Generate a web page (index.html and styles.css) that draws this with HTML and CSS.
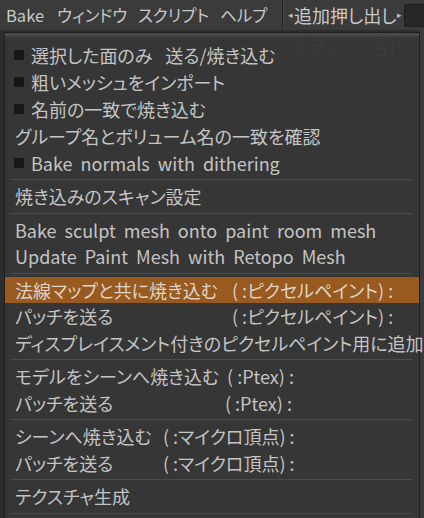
FILE: index.html
```html
<!DOCTYPE html>
<html lang="ja">
<head>
<meta charset="utf-8">
<link rel="stylesheet" href="styles.css">
</head>
<body>
<div class="app">
  <div class="menubar">
    <span class="mb-item mb-bake">Bake</span>
    <span class="mb-item mb-win">ウィンドウ</span>
    <span class="mb-item mb-script">スクリプト</span>
    <span class="mb-item mb-help">ヘルプ</span>
    <span class="mb-vsep"></span>
    <span class="mb-extrude"><span class="arrow">◂</span>追加押し出し<span class="arrow">▸</span></span>
    <span class="mb-box"></span>
  </div>
  <div class="workspace">
    <div class="menu">
      <div class="ghost"><span class="ghost-a">プラン</span><span class="ghost-b">引っ</span></div>
      <div class="menu-top"></div>
      <div class="menu-list">
        <div class="group g1">
          <div class="item"><span class="sq"></span>選択した面のみ<span class="gap"></span>送る/焼き込む</div>
          <div class="item"><span class="sq"></span>粗いメッシュをインポート</div>
          <div class="item"><span class="sq"></span>名前の一致で焼き込む</div>
          <div class="item">グループ名とボリューム名の一致を確認</div>
          <div class="item latin"><span class="sq"></span>Bake normals with dithering</div>
        </div>
        <div class="sep"></div>
        <div class="item">焼き込みのスキャン設定</div>
        <div class="sep"></div>
        <div class="item latin">Bake sculpt mesh onto paint room mesh</div>
        <div class="item latin">Update Paint Mesh with Retopo Mesh</div>
        <div class="sep"></div>
        <div class="item active"><span class="lbl lbl-pix">法線マップと共に焼き込む</span><span class="tag">( :ピクセルペイント) :</span></div>
        <div class="item"><span class="lbl lbl-pix">パッチを送る</span><span class="tag">( :ピクセルペイント) :</span></div>
        <div class="item">ディスプレイスメント付きのピクセルペイント用に追加</div>
        <div class="sep"></div>
        <div class="item"><span class="lbl lbl-ptex1">モデルをシーンへ焼き込む</span><span class="tag">( :Ptex) :</span></div>
        <div class="item"><span class="lbl lbl-ptex2">パッチを送る</span><span class="tag">( :Ptex) :</span></div>
        <div class="sep"></div>
        <div class="item"><span class="lbl lbl-micro">シーンへ焼き込む</span><span class="tag">( :マイクロ頂点) :</span></div>
        <div class="item"><span class="lbl lbl-micro">パッチを送る</span><span class="tag">( :マイクロ頂点) :</span></div>
        <div class="sep"></div>
        <div class="item">テクスチャ生成</div>
        <div class="sep"></div>
      </div>
    </div>
  </div>
</div>
</body>
</html>
```
FILE: styles.css
```css
html, body {
  margin: 0;
  padding: 0;
}
body {
  background: #2c2c2c;
  font-family: "Noto Sans CJK JP", "Noto Sans", sans-serif;
  font-feature-settings: "palt";
  font-size: 18px;
  color: #c4c4c4;
}
.app {
  width: 424px;
  height: 518px;
  overflow: hidden;
  position: relative;
}
.menubar {
  height: 30px;
  background: #3b3b3b;
  display: flex;
  align-items: center;
  white-space: nowrap;
  color: #c8c8c8;
}
.mb-item {
  line-height: 30px;
  font-size: 16.5px;
  flex: none;
}
.mb-bake {
  margin-left: 6px;
  width: 51px;
}
.mb-win {
  width: 81px;
}
.mb-script {
  width: 82px;
}
.mb-help {
  width: 62px;
}
.mb-vsep {
  width: 1px;
  height: 30px;
  background: #262626;
  box-shadow: 1px 0 0 #444444;
  flex: none;
}
.mb-extrude {
  margin-left: 4px;
  line-height: 30px;
  display: flex;
  align-items: center;
  flex: none;
}
.arrow {
  font-size: 9px;
  color: #bdbdbd;
  margin: 0 1px;
}
.mb-box {
  margin-left: auto;
  margin-right: -6px;
  width: 24px;
  height: 21px;
  background: #272727;
  border: 1px solid #1c1c1c;
  border-radius: 2px;
  flex: none;
}
.workspace {
  position: relative;
  height: 488px;
  background: linear-gradient(to left, #3b3b3b 0 4px, #2d2d2d 4px);
}
.menu {
  position: absolute;
  left: 4px;
  top: 2px;
  width: 414px;
  height: 520px;
  border: 1px solid #1f1f1f;
  background: #363636;
}
.ghost {
  position: absolute;
  top: 0;
  left: 0;
  right: 0;
  height: 28px;
  font-size: 20px;
  line-height: 28px;
  color: rgba(255, 255, 255, 0.035);
  white-space: nowrap;
}
.ghost-a {
  position: absolute;
  left: 285px;
}
.ghost-b {
  position: absolute;
  left: 371px;
}
.menu-top {
  height: 3px;
  background: #484848;
  border-bottom: 1px solid #3e3e3e;
}
.menu-list {
  padding-top: 4px;
}
.item {
  height: 26.5px;
  line-height: 26px;
  padding-left: 10px;
  display: flex;
  align-items: center;
  white-space: nowrap;
}
.g1 .item {
  height: 27px;
}
.latin {
  word-spacing: 4px;
}
.sq {
  width: 10px;
  height: 10px;
  background: #171717;
  margin-left: -1px;
  margin-right: 7px;
  flex: none;
}
.gap {
  display: inline-block;
  width: 13px;
}
.sep {
  height: 1px;
  background: #4b4b4b;
  margin: 3px 7px 3px 5px;
}
.item.active {
  background: #985a1e;
  color: #ddd3c9;
}
.lbl {
  display: inline-block;
}
.lbl-pix {
  min-width: 217px;
}
.lbl-ptex1 {
  margin-right: 8px;
}
.lbl-ptex2 {
  min-width: 210px;
}
.lbl-micro {
  min-width: 148px;
}
```
